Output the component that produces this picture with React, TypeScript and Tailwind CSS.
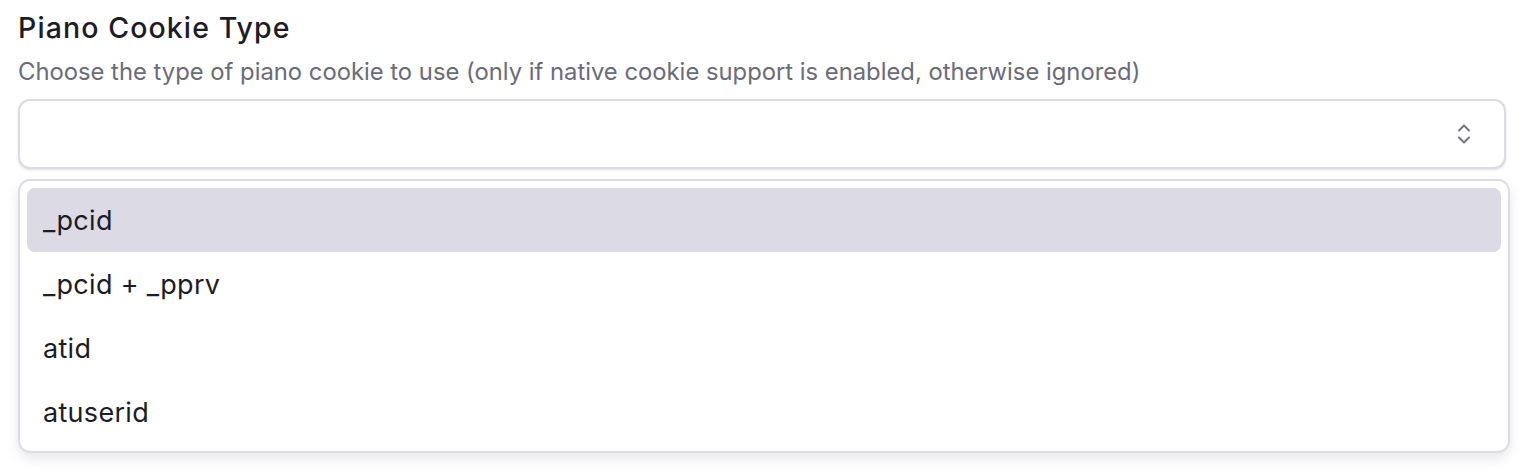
import React from "react";

export default function App() {
  const items = ["_pcid", "_pcid + _pprv", "atid", "atuserid"];
  return (
    <div
      className="w-[1526px] h-[470px] bg-white text-[#1c1b22] overflow-hidden"
      style={{ fontFamily: "Inter, 'Noto Sans', sans-serif" }}
    >
      <div className="pl-[18px] pr-[16px] pt-[10px]">
        <div className="text-[28.5px] leading-[36px] font-medium tracking-[1.1px] text-[#1d1b26]">Piano Cookie Type</div>
        <div className="mt-[12px] text-[23.8px] leading-[28px] text-[#6b6b7a]">
          Choose the type of piano cookie to use (only if native cookie support is enabled, otherwise ignored)
        </div>
        <div className="mt-[13px] w-[1488px] h-[70px] rounded-[12px] border-2 border-[#dcdbe3] bg-white shadow-sm flex items-center justify-end pr-[32px]">
          <svg width="16" height="22" viewBox="0 0 16 22" fill="none" stroke="#77767f" strokeWidth="2" strokeLinecap="round" strokeLinejoin="round">
            <path d="M3 7.5 L8 2.5 L13 7.5" />
            <path d="M3 14.5 L8 19.5 L13 14.5" />
          </svg>
        </div>
        <div className="mt-[10px] w-[1492px] rounded-[12px] border-2 border-[#dedde5] bg-white shadow-[0_6px_14px_rgba(0,0,0,0.09)] p-[7px] flex flex-col">
          {items.map((it, i) => (
            <div
              key={it}
              className={
                "h-[64px] rounded-[8px] flex items-center pl-[16px] pt-[3px] text-[27px] tracking-[0.3px] text-[#1d1b26] " +
                (i === 0 ? "bg-[#dcdae4]" : "")
              }
            >
              {it}
            </div>
          ))}
        </div>
      </div>
    </div>
  );
}
